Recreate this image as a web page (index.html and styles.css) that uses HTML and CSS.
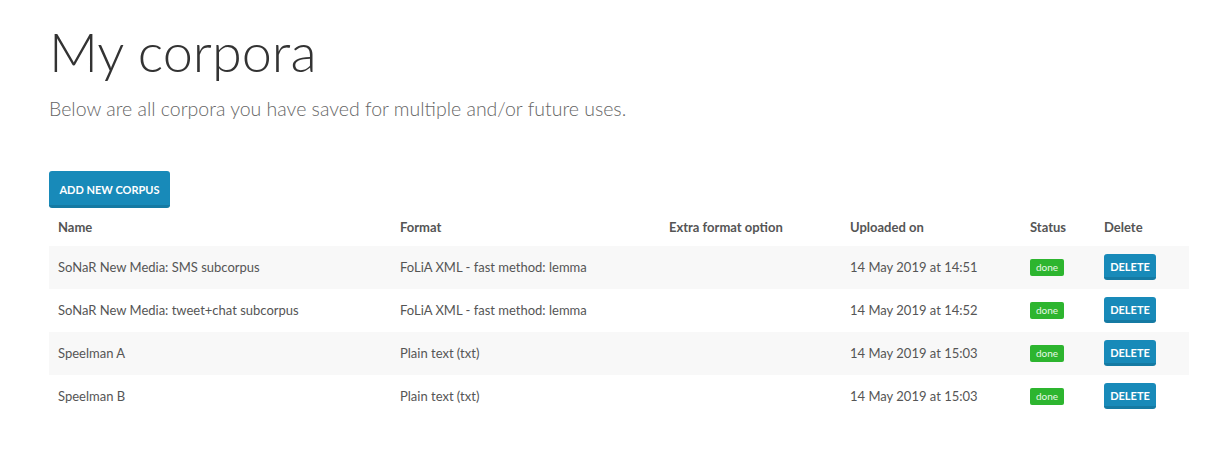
FILE: index.html
```html
<!DOCTYPE html>
<html>
<head>
<meta charset="utf-8">
<link rel="stylesheet" href="styles.css">
</head>
<body>
<div class="page">
  <h1 class="title">My corpora</h1>
  <p class="lead">Below are all corpora you have saved for multiple and/or future uses.</p>
  <button class="btn btn-add">ADD NEW CORPUS</button>
  <table class="corpora">
    <thead>
      <tr>
        <th class="c-name">Name</th>
        <th class="c-format">Format</th>
        <th class="c-extra">Extra format option</th>
        <th class="c-date">Uploaded on</th>
        <th class="c-status">Status</th>
        <th class="c-del">Delete</th>
      </tr>
    </thead>
    <tbody>
      <tr class="odd">
        <td>SoNaR New Media: SMS subcorpus</td>
        <td>FoLiA XML - fast method: lemma</td>
        <td></td>
        <td>14 May 2019 at 14:51</td>
        <td><span class="badge">done</span></td>
        <td><button class="btn btn-del">DELETE</button></td>
      </tr>
      <tr>
        <td>SoNaR New Media: tweet+chat subcorpus</td>
        <td>FoLiA XML - fast method: lemma</td>
        <td></td>
        <td>14 May 2019 at 14:52</td>
        <td><span class="badge">done</span></td>
        <td><button class="btn btn-del">DELETE</button></td>
      </tr>
      <tr class="odd">
        <td>Speelman A</td>
        <td>Plain text (txt)</td>
        <td></td>
        <td>14 May 2019 at 15:03</td>
        <td><span class="badge">done</span></td>
        <td><button class="btn btn-del">DELETE</button></td>
      </tr>
      <tr>
        <td>Speelman B</td>
        <td>Plain text (txt)</td>
        <td></td>
        <td>14 May 2019 at 15:03</td>
        <td><span class="badge">done</span></td>
        <td><button class="btn btn-del">DELETE</button></td>
      </tr>
    </tbody>
  </table>
</div>
</body>
</html>
```
FILE: styles.css
```css
html, body {
  margin: 0;
  padding: 0;
  background: #fff;
}
body {
  font-family: "Lato", "Liberation Sans", sans-serif;
  color: #555;
}
.page {
  padding: 18px 40px 0 49px;
  width: 1140px;
}
.title {
  margin: 0;
  font-size: 54px;
  font-weight: 300;
  line-height: 68px;
  color: #333;
}
.lead {
  margin: 9px 0 0;
  font-size: 19.5px;
  font-weight: 300;
  line-height: 28px;
  color: #666;
}
.btn {
  font-family: inherit;
  border: 0;
  border-bottom: 3px solid #157aa3;
  background: #188ab9;
  color: #fff;
  font-weight: 700;
  border-radius: 3px;
  cursor: pointer;
  padding: 0;
}
.btn-add {
  margin-top: 48px;
  width: 121px;
  height: 37px;
  font-size: 11px;
  padding-top: 2px;
}
.corpora {
  width: 1140px;
  border-collapse: collapse;
  margin-top: 3px;
  font-size: 13px;
}
.corpora th {
  text-align: left;
  font-weight: 700;
  color: #555;
  height: 32px;
  padding: 0 9px 3px;
}
.corpora td {
  height: 41px;
  padding: 0 9px 2px;
  color: #555;
}
.corpora tr.odd td {
  background: #f8f8f8;
}
.c-name { width: 324px; }
.c-format { width: 251px; }
.c-extra { width: 163px; }
.c-date { width: 162px; }
.c-status { width: 56px; }
.c-del { width: 76px; }
.badge {
  display: inline-block;
  background: #2db52f;
  color: #e8f8e8;
  font-size: 10px;
  line-height: 17px;
  height: 17px;
  width: 34px;
  text-align: center;
  border-radius: 2px;
  vertical-align: middle;
}
.btn-del {
  width: 52px;
  height: 26px;
  font-size: 11px;
  padding-top: 2px;
  vertical-align: middle;
}
```
